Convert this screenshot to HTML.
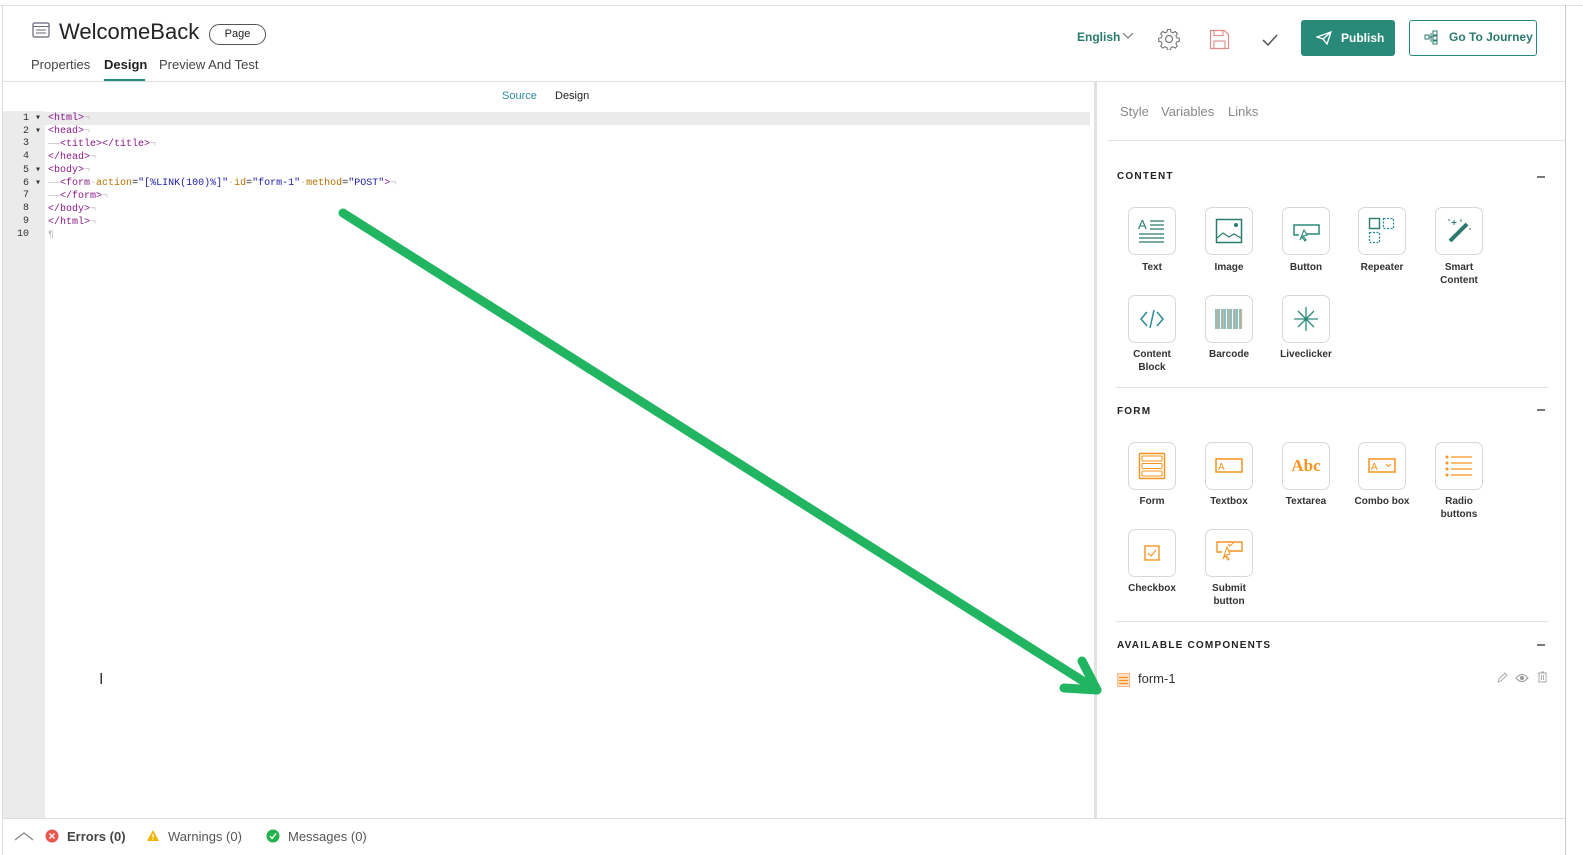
<!DOCTYPE html>
<html><head><meta charset="utf-8">
<style>
*{box-sizing:border-box;margin:0;padding:0}
body{width:1583px;height:855px;background:#fff;font-family:"Liberation Sans",sans-serif;position:relative;overflow:hidden;color:#222}
.abs{position:absolute}
.tile{position:absolute;width:48px;height:48px;border:1px solid #d8d8d8;border-radius:7px;background:#fff;display:flex;align-items:center;justify-content:center}
.lbl{position:absolute;width:80px;text-align:center;font-size:10px;font-weight:bold;color:#333;line-height:13px}
.sec{position:absolute;left:1117px;font-size:10px;font-weight:bold;letter-spacing:1.2px;color:#222}
.minus{position:absolute;left:1537px;width:8px;height:1.5px;background:#777}
.code{position:absolute;left:48px;font-family:"Liberation Mono",monospace;font-size:10px;line-height:13px;white-space:pre}
.ln{position:absolute;left:3px;width:38px;text-align:right;font-family:"Liberation Mono",monospace;font-size:10px;color:#333}
.t{color:#8a1a8a}.a{color:#b07000}.v{color:#1a1aa6}.g{color:#bbb}
</style></head><body>
<!-- frame lines -->
<div class="abs" style="left:0;top:5px;width:1583px;height:1px;background:#e3e3e3"></div>
<div class="abs" style="left:2px;top:5px;width:1px;height:850px;background:#ddd"></div>
<div class="abs" style="left:1565px;top:5px;width:1px;height:850px;background:#ccc"></div>
<div class="abs" style="left:3px;top:81px;width:1562px;height:1px;background:#e0e0e0"></div>

<!-- header -->
<svg class="abs" style="left:32px;top:22px" width="18" height="16" viewBox="0 0 18 16"><rect x="1" y="1" width="16" height="14" rx="1.5" fill="none" stroke="#667" stroke-width="1.2"/><line x1="1" y1="4.5" x2="17" y2="4.5" stroke="#667"/><line x1="4" y1="8" x2="14" y2="8" stroke="#667"/><line x1="4" y1="11" x2="14" y2="11" stroke="#667"/></svg>
<div class="abs" style="left:59px;top:19px;font-size:22px;color:#222">WelcomeBack</div>
<div class="abs" style="left:209px;top:24px;width:57px;height:21px;border:1px solid #555;border-radius:11px;font-size:11px;text-align:center;line-height:19px">Page</div>
<div class="abs" style="left:31px;top:57px;font-size:13px;color:#444">Properties</div>
<div class="abs" style="left:104px;top:57px;font-size:13px;font-weight:bold;color:#222">Design</div>
<div class="abs" style="left:104px;top:79px;width:41px;height:2px;background:#2a8a7a"></div>
<div class="abs" style="left:159px;top:57px;font-size:13px;color:#444">Preview And Test</div>

<div class="abs" style="left:1077px;top:30px;font-size:12px;font-weight:bold;color:#2a7a6e">English</div>
<svg class="abs" style="left:1122px;top:32px" width="12" height="8"><polyline points="1,1 6,6 11,1" fill="none" stroke="#777" stroke-width="1.2"/></svg>
<svg class="abs" style="left:1158px;top:28px" width="22" height="22" viewBox="0 0 22 22"><circle cx="11" cy="11" r="3.5" fill="none" stroke="#777" stroke-width="1.2"/><path d="M9.5 1.5h3l.5 2.5 2 .9 2.2-1.4 2.1 2.1-1.4 2.2.9 2 2.5.5v3l-2.5.5-.9 2 1.4 2.2-2.1 2.1-2.2-1.4-2 .9-.5 2.5h-3l-.5-2.5-2-.9-2.2 1.4-2.1-2.1 1.4-2.2-.9-2-2.5-.5v-3l2.5-.5.9-2-1.4-2.2 2.1-2.1 2.2 1.4 2-.9z" fill="none" stroke="#777" stroke-width="1.1"/></svg>
<svg class="abs" style="left:1209px;top:29px" width="21" height="21" viewBox="0 0 21 21"><path d="M1.5 1.5h14l4 4v14h-18z" fill="none" stroke="#e08a8a" stroke-width="1.2"/><rect x="5" y="1.5" width="9" height="5" fill="none" stroke="#e08a8a" stroke-width="1.1"/><rect x="5" y="12" width="11" height="7.5" fill="none" stroke="#e08a8a" stroke-width="1.1"/></svg>
<svg class="abs" style="left:1261px;top:33px" width="18" height="14"><polyline points="2,7 7,12 16,2" fill="none" stroke="#555" stroke-width="1.5"/></svg>
<div class="abs" style="left:1301px;top:20px;width:94px;height:36px;background:#2a8a7a;border-radius:3px;color:#fff;font-size:12px;font-weight:bold;line-height:36px;padding-left:40px">Publish</div>
<svg class="abs" style="left:1316px;top:31px" width="16" height="14" viewBox="0 0 16 14"><path d="M1 6 15 1 11 13 7 8z M7 8 15 1" fill="none" stroke="#fff" stroke-width="1.3"/></svg>
<div class="abs" style="left:1409px;top:20px;width:128px;height:36px;border:1.5px solid #2a8a7a;border-radius:3px;color:#2a7a6e;font-size:12px;font-weight:bold;line-height:33px;padding-left:39px">Go To Journey</div>
<svg class="abs" style="left:1424px;top:30px" width="15" height="15" viewBox="0 0 15 15"><rect x="1" y="5" width="4" height="4" fill="none" stroke="#2a7a6e"/><rect x="9" y="1" width="4" height="4" fill="none" stroke="#2a7a6e"/><rect x="9" y="6" width="4" height="4" fill="none" stroke="#2a7a6e"/><rect x="9" y="11" width="4" height="3" fill="none" stroke="#2a7a6e"/><path d="M5 7h4M7 3v9" stroke="#2a7a6e" fill="none"/></svg>

<!-- editor -->
<div class="abs" style="left:502px;top:90px;font-size:11px;color:#2a8aa0">Source</div>
<div class="abs" style="left:555px;top:90px;font-size:11px;color:#222">Design</div>
<div class="abs" style="left:3px;top:111px;width:42px;height:707px;background:#ebebeb"></div>
<div class="abs" style="left:3px;top:112px;width:1087px;height:13px;background:#ebebeb"></div>
<div class="ln" style="top:112px">1 ▾</div><div class="ln" style="top:125px">2 ▾</div><div class="ln" style="top:138px">3&nbsp;&nbsp;</div><div class="ln" style="top:151px">4&nbsp;&nbsp;</div><div class="ln" style="top:164px">5 ▾</div><div class="ln" style="top:177px">6 ▾</div><div class="ln" style="top:190px">7&nbsp;&nbsp;</div><div class="ln" style="top:203px">8&nbsp;&nbsp;</div><div class="ln" style="top:216px">9&nbsp;&nbsp;</div><div class="ln" style="top:229px">10&nbsp;&nbsp;</div>
<div class="code" style="top:112px"><span class="t">&lt;html&gt;</span><span class="g">¬</span>
<span class="t">&lt;head&gt;</span><span class="g">¬</span>
<span class="g">——</span><span class="t">&lt;title&gt;&lt;/title&gt;</span><span class="g">¬</span>
<span class="t">&lt;/head&gt;</span><span class="g">¬</span>
<span class="t">&lt;body&gt;</span><span class="g">¬</span>
<span class="g">——</span><span class="t">&lt;form</span><span class="g">·</span><span class="a">action</span>=<span class="v">"[%LINK(100)%]"</span><span class="g">·</span><span class="a">id</span>=<span class="v">"form-1"</span><span class="g">·</span><span class="a">method</span>=<span class="v">"POST"</span><span class="t">&gt;</span><span class="g">¬</span>
<span class="g">——</span><span class="t">&lt;/form&gt;</span><span class="g">¬</span>
<span class="t">&lt;/body&gt;</span><span class="g">¬</span>
<span class="t">&lt;/html&gt;</span><span class="g">¬</span>
<span class="g">¶</span></div>
<div class="abs" style="left:99px;top:671px;font-size:16px;color:#333">I</div>

<!-- splitter -->
<div class="abs" style="left:1094px;top:82px;width:3px;height:736px;background:#e2e2e2"></div>

<!-- right panel -->
<div class="abs" style="left:1120px;top:104px;font-size:13px;color:#888">Style</div>
<div class="abs" style="left:1161px;top:104px;font-size:13px;color:#888">Variables</div>
<div class="abs" style="left:1228px;top:104px;font-size:13px;color:#888">Links</div>
<div class="abs" style="left:1108px;top:140px;width:457px;height:1px;background:#e3e3e3"></div>

<div class="sec" style="top:171px">CONTENT</div><div class="minus" style="top:176px"></div>
<div class="tile" style="left:1128px;top:207px"><svg width="28" height="28"><text x="0" y="12" font-size="13" fill="#2a7a6e" font-family="Liberation Sans">A</text><path d="M12 4h14M12 8h14M12 12h14M1 17h25M1 21h25M1 25h25" stroke="#2a7a6e" stroke-width="1.3"/></svg></div>
<div class="tile" style="left:1205px;top:207px"><svg width="28" height="28"><rect x="1.5" y="2.5" width="25" height="23" fill="none" stroke="#2a7a6e" stroke-width="1.5"/><circle cx="21" cy="8" r="2" fill="#2a7a6e"/><path d="M2 21l6-5 6 4 5-3 7 4" fill="none" stroke="#2a7a6e" stroke-width="1.2"/></svg></div>
<div class="tile" style="left:1282px;top:207px"><svg width="28" height="28"><path d="M7 18H2V8h25v9H14" fill="none" stroke="#2a8a7a" stroke-width="1.5"/><path d="M12 13l-4 10 2-3 3 4 1-1-3-4 4-1z" fill="none" stroke="#2a8a7a" stroke-width="1.1"/></svg></div>
<div class="tile" style="left:1358px;top:207px"><svg width="28" height="28"><rect x="1.5" y="1.5" width="10" height="10" fill="none" stroke="#2a7a6e" stroke-width="1.4"/><rect x="15.5" y="1.5" width="10" height="10" fill="none" stroke="#2a8a9a" stroke-width="1.3" stroke-dasharray="2 1.5"/><rect x="1.5" y="15.5" width="10" height="10" fill="none" stroke="#2a8a9a" stroke-width="1.3" stroke-dasharray="2 1.5"/></svg></div>
<div class="tile" style="left:1435px;top:207px"><svg width="28" height="28"><path d="M5 24L22 7" stroke="#2a7a6e" stroke-width="4"/><path d="M9 3v5M6.5 5.5h5M4 2v2M16 2v3M25 11v2" stroke="#2a7a6e" stroke-width="1"/></svg></div>
<div class="lbl" style="left:1112px;top:261px">Text</div>
<div class="lbl" style="left:1189px;top:261px">Image</div>
<div class="lbl" style="left:1266px;top:261px">Button</div>
<div class="lbl" style="left:1342px;top:261px">Repeater</div>
<div class="lbl" style="left:1419px;top:261px">Smart<br>Content</div>
<div class="tile" style="left:1128px;top:295px"><svg width="28" height="28"><path d="M9 7l-6 7 6 7M19 7l6 7-6 7M16 5l-4 18" fill="none" stroke="#2a8a9a" stroke-width="1.5"/></svg></div>
<div class="tile" style="left:1205px;top:295px"><svg width="30" height="24"><g stroke-width="1.3"><path d="M2 2v20M5 2v20M8 2v20M11 2v20M14 2v20M17 2v20M20 2v20M23 2v20M26 2v20" stroke="#4aa0b0"/><path d="M3.5 2v20M9.5 2v20M15.5 2v20M21.5 2v20M27.5 2v20" stroke="#e0b080"/></g></svg></div>
<div class="tile" style="left:1282px;top:295px"><svg width="28" height="28"><path d="M14 2v24M2 14h24M6 6l16 16M22 6L6 22" stroke="#2a8a7a" stroke-width="1.3"/></svg></div>
<div class="lbl" style="left:1112px;top:348px">Content<br>Block</div>
<div class="lbl" style="left:1189px;top:348px">Barcode</div>
<div class="lbl" style="left:1266px;top:348px">Liveclicker</div>
<div class="abs" style="left:1116px;top:387px;width:432px;height:1px;background:#e3e3e3"></div>

<div class="sec" style="top:406px">FORM</div><div class="minus" style="top:409px"></div>
<div class="tile" style="left:1128px;top:442px"><svg width="28" height="28"><rect x="1.5" y="1.5" width="25" height="25" rx="1" fill="none" stroke="#f7931e" stroke-width="1.5"/><rect x="4" y="4" width="20" height="5" rx="1" fill="none" stroke="#f7931e"/><rect x="4" y="11.5" width="20" height="5" rx="1" fill="none" stroke="#f7931e"/><rect x="4" y="19" width="20" height="5" rx="1" fill="none" stroke="#f7931e"/></svg></div>
<div class="tile" style="left:1205px;top:442px"><svg width="28" height="16"><rect x="1" y="1" width="26" height="13" fill="none" stroke="#f7931e" stroke-width="1.5"/><text x="3" y="12" font-size="10" fill="#f7931e" font-family="Liberation Sans">A</text></svg></div>
<div class="tile" style="left:1282px;top:442px"><span style="font-family:'Liberation Serif',serif;font-weight:bold;font-size:17px;color:#f7931e">Abc</span></div>
<div class="tile" style="left:1358px;top:442px"><svg width="28" height="16"><rect x="1" y="1" width="26" height="13" fill="none" stroke="#f7931e" stroke-width="1.5"/><text x="3" y="12" font-size="10" fill="#f7931e" font-family="Liberation Sans">A</text><polyline points="18,6 20.5,8.5 23,6" fill="none" stroke="#f7931e"/></svg></div>
<div class="tile" style="left:1435px;top:442px"><svg width="28" height="24"><g fill="#f7931e"><circle cx="2" cy="3" r="1.5"/><circle cx="2" cy="9" r="1.5"/><circle cx="2" cy="15" r="1.5"/><circle cx="2" cy="21" r="1.5"/></g><path d="M6 3h21M6 9h21M6 15h21M6 21h21" stroke="#f7931e" stroke-width="1.2"/></svg></div>
<div class="lbl" style="left:1112px;top:495px">Form</div>
<div class="lbl" style="left:1189px;top:495px">Textbox</div>
<div class="lbl" style="left:1266px;top:495px">Textarea</div>
<div class="lbl" style="left:1342px;top:495px">Combo box</div>
<div class="lbl" style="left:1419px;top:495px">Radio<br>buttons</div>
<div class="tile" style="left:1128px;top:529px"><svg width="16" height="16"><rect x="1" y="1" width="14" height="14" fill="none" stroke="#f7931e" stroke-width="1.4"/><polyline points="4,8 7,11 12,5" fill="none" stroke="#f7931e" stroke-width="1.1"/></svg></div>
<div class="tile" style="left:1205px;top:529px"><svg width="28" height="26"><path d="M7 12H2V2h25v9H14" fill="none" stroke="#f7931e" stroke-width="1.4"/><path d="M12 7l-4 12 2-3 3 4 1-1-3-4 4-1z" fill="none" stroke="#f7931e"/><polyline points="13,4 15,6 19,2" fill="none" stroke="#f7931e"/></svg></div>
<div class="lbl" style="left:1112px;top:582px">Checkbox</div>
<div class="lbl" style="left:1189px;top:582px">Submit<br>button</div>
<div class="abs" style="left:1116px;top:621px;width:432px;height:1px;background:#e3e3e3"></div>

<div class="sec" style="top:640px">AVAILABLE COMPONENTS</div><div class="minus" style="top:644px"></div>
<svg class="abs" style="left:1117px;top:673px" width="13" height="14"><rect x="0.5" y="0.5" width="12" height="13" fill="#fde0c8" stroke="#fbb98a"/><path d="M2 4.5h9M2 7.5h9M2 10.5h9" stroke="#f7931e" stroke-width="1.3"/></svg>
<div class="abs" style="left:1138px;top:671px;font-size:13px;color:#333">form-1</div>
<svg class="abs" style="left:1496px;top:672px" width="12" height="12"><path d="M2 10l1-3 6-6 2 2-6 6z" fill="none" stroke="#aaa"/></svg>
<svg class="abs" style="left:1515px;top:673px" width="14" height="10"><path d="M1 5q6-7 12 0q-6 7-12 0z" fill="none" stroke="#999"/><circle cx="7" cy="5" r="2" fill="#999"/></svg>
<svg class="abs" style="left:1537px;top:671px" width="11" height="12"><path d="M1 2h9M4 1h3M2 2v9h7V2M4.5 4v5M6.5 4v5" fill="none" stroke="#aaa"/></svg>

<!-- footer -->
<div class="abs" style="left:3px;top:818px;width:1562px;height:1px;background:#ddd"></div>
<svg class="abs" style="left:14px;top:831px" width="20" height="10"><polyline points="1,9 10,2 19,9" fill="none" stroke="#888" stroke-width="1.3"/></svg>
<svg class="abs" style="left:45px;top:829px" width="14" height="14"><circle cx="7" cy="7" r="6.5" fill="#e8574f"/><path d="M4.5 4.5l5 5M9.5 4.5l-5 5" stroke="#fff" stroke-width="1.3"/></svg>
<div class="abs" style="left:67px;top:829px;font-size:13px;font-weight:bold;color:#444">Errors (0)</div>
<svg class="abs" style="left:146px;top:829px" width="14" height="13"><path d="M7 1l6 11H1z" fill="#f0b400"/><path d="M7 5v3.5M7 9.8v1" stroke="#fff" stroke-width="1.3"/></svg>
<div class="abs" style="left:168px;top:829px;font-size:13px;color:#555">Warnings (0)</div>
<svg class="abs" style="left:266px;top:829px" width="14" height="14"><circle cx="7" cy="7" r="6.5" fill="#22b14c"/><polyline points="4,7 6,9.5 10,4.5" fill="none" stroke="#fff" stroke-width="1.4"/></svg>
<div class="abs" style="left:288px;top:829px;font-size:13px;color:#555">Messages (0)</div>

<!-- green arrow -->
<svg class="abs" style="left:0;top:0" width="1583" height="855"><g stroke="#22b561" stroke-width="9" stroke-linecap="round" fill="none"><line x1="343" y1="213" x2="1094" y2="688"/><line x1="1082" y1="661" x2="1097" y2="690"/><line x1="1064" y1="688" x2="1097" y2="690"/></g></svg>
</body></html>
